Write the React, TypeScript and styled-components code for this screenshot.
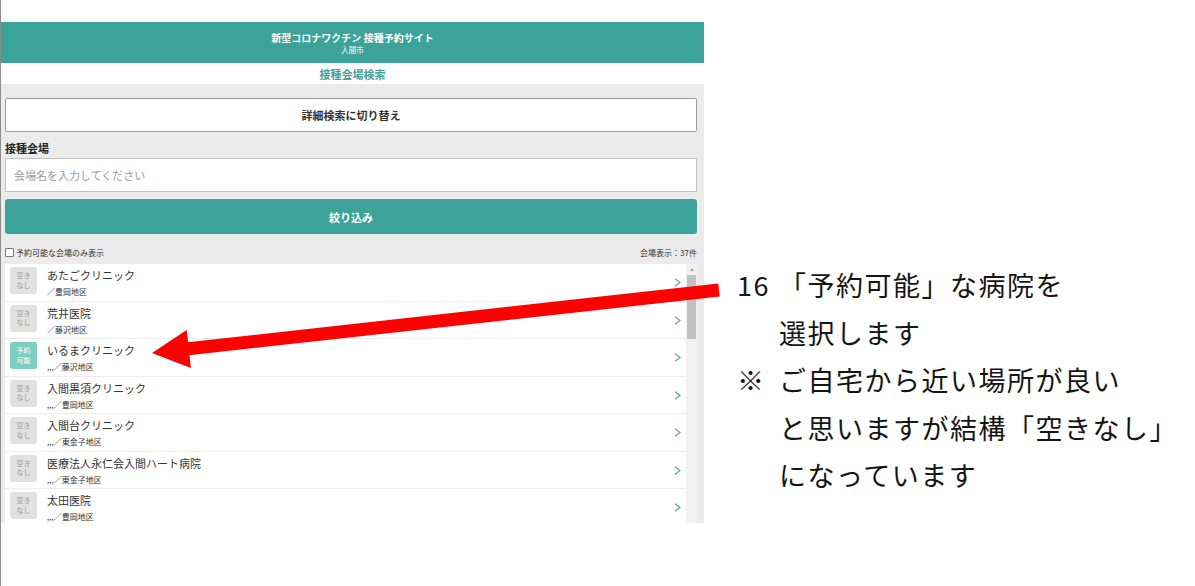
import { Fragment } from "react";
import styled, { createGlobalStyle } from "styled-components";

const GlobalStyle = createGlobalStyle`
  html, body {
    margin: 0;
    padding: 0;
    background: #ffffff;
    overflow: hidden;
  }

  body {
    font-family: "Noto Sans CJK JP", "Noto Sans", sans-serif;
    color: #333333;
  }
`;

const TEAL = "#3ba399";

const Page = styled.div`
  position: relative;
  display: flex;
  width: 1195px;
  height: 586px;
`;

const Pane = styled.div`
  width: 703px;
  height: 586px;
  border-left: 1px solid #8c8c8c;
  display: flex;
  flex-direction: column;
  flex: none;
`;

const TopGap = styled.div`
  height: 22px;
`;

const Header = styled.header`
  height: 41px;
  background: ${TEAL};
  color: #ffffff;
  display: flex;
  flex-direction: column;
  align-items: center;
  justify-content: center;
`;

const SiteTitle = styled.div`
  font-size: 10px;
  font-weight: 700;
  line-height: 13px;
`;

const CityName = styled.div`
  font-size: 7.5px;
  line-height: 11px;
`;

const SubHeader = styled.div`
  height: 21px;
  display: flex;
  align-items: center;
  justify-content: center;
  font-size: 11px;
  font-weight: 700;
  color: #479c94;
`;

const Content = styled.main`
  height: 439px;
  background: #ebebeb;
  padding: 14px 7px 0 4px;
  box-sizing: border-box;
  display: flex;
  flex-direction: column;
  overflow: hidden;
`;

const ToggleButton = styled.button`
  height: 34px;
  flex: none;
  background: #ffffff;
  border: 1px solid #9c9c9c;
  border-radius: 2px;
  font-family: inherit;
  font-size: 11px;
  font-weight: 700;
  color: #333333;
`;

const FieldLabel = styled.div`
  margin-top: 9px;
  font-size: 11px;
  font-weight: 700;
  line-height: 14px;
  color: #222222;
`;

const SearchInput = styled.input`
  margin-top: 3px;
  height: 34px;
  flex: none;
  box-sizing: border-box;
  border: 1px solid #c2c2c2;
  background: #ffffff;
  padding: 0 8px;
  font-family: inherit;
  font-size: 11px;
  color: #333333;
  outline: none;

  &::placeholder {
    color: #9a9a9a;
  }
`;

const FilterButton = styled.button`
  margin-top: 7px;
  height: 35px;
  flex: none;
  background: ${TEAL};
  border: none;
  border-radius: 3px;
  color: #ffffff;
  font-family: inherit;
  font-size: 11px;
  font-weight: 700;
`;

const MetaRow = styled.div`
  margin-top: 11px;
  height: 14px;
  display: flex;
  align-items: center;
  justify-content: space-between;
  font-size: 8px;
  color: #333333;
`;

const CheckLabel = styled.label`
  display: flex;
  align-items: center;
  gap: 2px;
`;

const CheckBox = styled.span`
  width: 7px;
  height: 7px;
  border: 1px solid #767676;
  border-radius: 1px;
  background: #ffffff;
`;

const ListFrame = styled.div`
  margin-top: 5px;
  height: 259px;
  flex: none;
  display: flex;
  background: #ffffff;
`;

const Rows = styled.div`
  flex: 1;
  overflow: hidden;
`;

const Row = styled.div`
  height: 37.5px;
  box-sizing: border-box;
  display: flex;
  align-items: flex-start;
  padding: 3px 5px 0 5px;
  border-bottom: 1px solid #ececec;
`;

const Badge = styled.div<{ $open: boolean }>`
  width: 27px;
  height: 27px;
  flex: none;
  margin-right: 10px;
  border-radius: 3px;
  display: flex;
  flex-direction: column;
  align-items: center;
  justify-content: center;
  font-size: 7px;
  line-height: 9.5px;
  background: ${(p) => (p.$open ? "#7ccdc4" : "#e1e1e1")};
  color: ${(p) => (p.$open ? "#ffffff" : "#9a9a9a")};
`;

const Info = styled.div`
  flex: 1;
  min-width: 0;
`;

const Name = styled.div`
  margin-top: 1px;
  font-size: 11px;
  line-height: 14px;
  color: #333333;
  white-space: nowrap;
`;

const Area = styled.div`
  margin-top: 5px;
  font-size: 8px;
  line-height: 10px;
  color: #333333;
  white-space: nowrap;
`;

const Chevron = styled.svg`
  flex: none;
  margin-top: 11px;
`;

const ScrollTrack = styled.div`
  width: 11px;
  flex: none;
  background: #f1f1f1;
  display: flex;
  flex-direction: column;
  align-items: center;
`;

const ScrollArrow = styled.div`
  height: 11px;
  display: flex;
  align-items: center;
  justify-content: center;

  &::before {
    content: "";
    border-left: 2.5px solid transparent;
    border-right: 2.5px solid transparent;
    border-bottom: 3px solid #a3a3a3;
  }
`;

const ScrollThumb = styled.div`
  width: 9px;
  height: 64px;
  background: #c1c1c1;
`;

const Annotation = styled.div`
  padding: 261px 0 0 33px;
  display: grid;
  grid-template-columns: 42px auto;
  align-content: start;
  font-family: "Noto Sans CJK JP", "Noto Sans", sans-serif;
  font-size: 27px;
  line-height: 47.5px;
  letter-spacing: 1.5px;
  color: #151515;
  white-space: nowrap;
`;

const Marker = styled.span``;

const Line = styled.span``;

const ArrowLayer = styled.svg`
  position: absolute;
  left: 0;
  top: 0;
  pointer-events: none;
`;

type Venue = { name: string; area: string; open: boolean };

const venues: Venue[] = [
  { name: "あたごクリニック", area: "／豊岡地区", open: false },
  { name: "荒井医院", area: "／藤沢地区", open: false },
  { name: "いるまクリニック", area: ",,,／藤沢地区", open: true },
  { name: "入間黒須クリニック", area: ",,,／豊岡地区", open: false },
  { name: "入間台クリニック", area: ",,,／東金子地区", open: false },
  { name: "医療法人永仁会入間ハート病院", area: ",,,／東金子地区", open: false },
  { name: "太田医院", area: ",,,／豊岡地区", open: false },
];

const notes: [string, string][] = [
  ["16", "「予約可能」な病院を"],
  ["", "選択します"],
  ["※", "ご自宅から近い場所が良い"],
  ["", "と思いますが結構「空きなし」"],
  ["", "になっています"],
];

export default function App() {
  return (
    <>
      <GlobalStyle />
      <Page>
        <Pane>
          <TopGap />
          <Header>
            <SiteTitle>新型コロナワクチン 接種予約サイト</SiteTitle>
            <CityName>入間市</CityName>
          </Header>
          <SubHeader>接種会場検索</SubHeader>
          <Content>
            <ToggleButton>詳細検索に切り替え</ToggleButton>
            <FieldLabel>接種会場</FieldLabel>
            <SearchInput placeholder="会場名を入力してください" />
            <FilterButton>絞り込み</FilterButton>
            <MetaRow>
              <CheckLabel>
                <CheckBox />
                予約可能な会場のみ表示
              </CheckLabel>
              <span>会場表示：37件</span>
            </MetaRow>
            <ListFrame>
              <Rows>
                {venues.map((v) => (
                  <Row key={v.name}>
                    <Badge $open={v.open}>
                      <span>{v.open ? "予約" : "空き"}</span>
                      <span>{v.open ? "可能" : "なし"}</span>
                    </Badge>
                    <Info>
                      <Name>{v.name}</Name>
                      <Area>{v.area}</Area>
                    </Info>
                    <Chevron width="7" height="9" viewBox="0 0 7 9">
                      <polyline
                        points="1,0.8 6,4.5 1,8.2"
                        fill="none"
                        stroke="#5a9e97"
                        strokeWidth="1.1"
                      />
                    </Chevron>
                  </Row>
                ))}
              </Rows>
              <ScrollTrack>
                <ScrollArrow />
                <ScrollThumb />
              </ScrollTrack>
            </ListFrame>
          </Content>
        </Pane>
        <Annotation>
          {notes.map(([mark, text], i) => (
            <Fragment key={i}>
              <Marker>{mark}</Marker>
              <Line>{text}</Line>
            </Fragment>
          ))}
        </Annotation>
        <ArrowLayer width="1195" height="586" viewBox="0 0 1195 586">
          <line x1="186" y1="349" x2="719" y2="290" stroke="#ff0000" strokeWidth="13" />
          <polygon points="152,353 186.7,330 190.9,368" fill="#ff0000" />
        </ArrowLayer>
      </Page>
    </>
  );
}
